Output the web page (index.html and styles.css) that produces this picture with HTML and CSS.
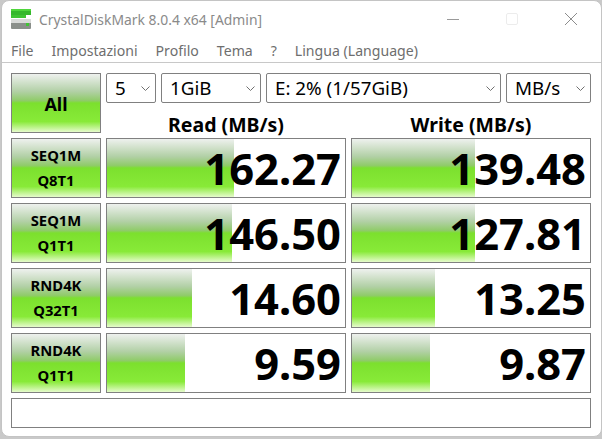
FILE: index.html
```html
<!DOCTYPE html>
<html lang="it">
<head>
<meta charset="utf-8">
<title>CrystalDiskMark</title>
<link rel="stylesheet" href="styles.css">
</head>
<body>
<div class="window">
  <header class="titlebar">
    <svg class="app-icon" width="20" height="20" viewBox="0 0 20 20">
      <rect x="0" y="0" width="20" height="6" fill="#35b82c"/>
      <rect x="0" y="0" width="20" height="2" fill="#4fd63c"/>
      <rect x="0" y="6" width="15" height="3" fill="#3fc433"/>
      <rect x="0" y="10" width="20" height="10" rx="1" fill="#8a8f8a"/>
      <rect x="0" y="10" width="20" height="4" fill="#d8dad8"/>
      <rect x="15" y="14" width="3" height="3" fill="#3fc433"/>
    </svg>
    <span class="title">CrystalDiskMark 8.0.4 x64 [Admin]</span>
    <div class="controls">
      <svg width="12" height="12" viewBox="0 0 12 12"><path d="M0 6.5H12" stroke="#9a9a9a" fill="none"/></svg>
      <svg width="12" height="12" viewBox="0 0 12 12"><rect x="0.5" y="0.5" width="11" height="11" rx="1.5" fill="none" stroke="#ececec"/></svg>
      <svg width="12" height="12" viewBox="0 0 12 12"><path d="M0 0L12 12M12 0L0 12" stroke="#8c8c8c" fill="none"/></svg>
    </div>
  </header>
  <nav class="menu">
    <span>File</span><span>Impostazioni</span><span>Profilo</span><span>Tema</span><span>?</span><span>Lingua (Language)</span>
  </nav>
  <main class="panel">
    <div class="btn all">All</div>
    <div class="head">
      <div class="selects">
        <div class="sel s-count">5<svg class="chev" viewBox="0 0 9 5"><path d="M0.5 0.5L4.5 4.5L8.5 0.5"/></svg></div>
        <div class="sel s-size">1GiB<svg class="chev" viewBox="0 0 9 5"><path d="M0.5 0.5L4.5 4.5L8.5 0.5"/></svg></div>
        <div class="sel s-drive">E: 2% (1/57GiB)<svg class="chev" viewBox="0 0 9 5"><path d="M0.5 0.5L4.5 4.5L8.5 0.5"/></svg></div>
        <div class="sel s-unit">MB/s<svg class="chev" viewBox="0 0 9 5"><path d="M0.5 0.5L4.5 4.5L8.5 0.5"/></svg></div>
      </div>
      <div class="cols"><div>Read (MB/s)</div><div>Write (MB/s)</div></div>
    </div>

    <div class="btn test">SEQ1M<br>Q8T1</div>
    <div class="val"><div class="bar" style="width:127px"></div><span>162.27</span></div>
    <div class="val"><div class="bar" style="width:123px"></div><span>139.48</span></div>

    <div class="btn test">SEQ1M<br>Q1T1</div>
    <div class="val"><div class="bar" style="width:125px"></div><span>146.50</span></div>
    <div class="val"><div class="bar" style="width:123px"></div><span>127.81</span></div>

    <div class="btn test">RND4K<br>Q32T1</div>
    <div class="val"><div class="bar" style="width:85px"></div><span>14.60</span></div>
    <div class="val"><div class="bar" style="width:83px"></div><span>13.25</span></div>

    <div class="btn test">RND4K<br>Q1T1</div>
    <div class="val"><div class="bar" style="width:78px"></div><span>9.59</span></div>
    <div class="val"><div class="bar" style="width:78px"></div><span>9.87</span></div>

    <div class="comment"></div>
  </main>
</div>
</body>
</html>
```

FILE: styles.css
```css
* { box-sizing: border-box; }
html, body { margin: 0; height: 100%; }
body {
  background: #c9c9c9;
  font-family: "Noto Sans", "Open Sans", sans-serif;
  overflow: hidden;
}
.window {
  width: 601px;
  height: 437px;
  margin-left: 1px;
  background: #fff;
  border: 1px solid #c4c4c4;
  border-radius: 8px;
  overflow: hidden;
}
.titlebar {
  height: 37px;
  display: flex;
  align-items: center;
  padding-left: 9px;
}
.app-icon { margin-top: -1px; }
.title {
  margin-left: 8px;
  font-size: 13.9px;
  color: #8a8a8a;
}
.controls {
  margin-left: auto;
  display: flex;
  gap: 47px;
  align-items: center;
  padding-right: 24px;
  margin-top: -2px;
}
.menu {
  height: 25px;
  display: flex;
  align-items: center;
  gap: 18px;
  padding-left: 9px;
  font-size: 14.1px;
  color: #6e6e6e;
  border-bottom: 1px solid #c8c8c8;
}
.panel {
  height: 373px;
  padding: 10px 0 0 9px;
  display: grid;
  grid-template-columns: 90px 240px 240px;
  grid-template-rows: 60px 60px 60px 60px 60px 30px;
  gap: 5px;
}
.btn {
  border: 1px solid #808080;
  background: linear-gradient(to bottom, #eef1ee 0%, #b2d0a6 30%, #8fcb68 46%, #7ce02e 50%, #88ea38 82%, #e6fbcc 100%);
  display: flex;
  align-items: center;
  justify-content: center;
  text-align: center;
  font-weight: 700;
  color: #000;
}
.all { font-size: 18px; padding-top: 2px; }
.test { font-size: 14.8px; line-height: 25px; padding-bottom: 1px; }
.head { grid-column: 2 / 4; display: flex; flex-direction: column; gap: 13px; }
.selects { display: flex; gap: 5px; height: 30px; }
.sel {
  border: 1px solid #808080;
  border-radius: 2px;
  background: #fff;
  display: flex;
  align-items: center;
  padding-left: 8px;
  position: relative;
  font-size: 18.8px;
  color: #000;
}
.s-count { width: 50px; }
.s-size { width: 100px; }
.s-drive { width: 235px; }
.s-unit { width: 85px; }
.chev {
  position: absolute;
  right: 5px;
  top: 12px;
  width: 9px;
  height: 5px;
  fill: none;
  stroke: #707070;
}
.cols { display: flex; gap: 5px; }
.cols div {
  width: 240px;
  text-align: center;
  font-size: 19.5px;
  font-weight: 700;
  line-height: 17px;
  color: #000;
}
.val {
  border: 1px solid #808080;
  background: #fff;
  position: relative;
  display: flex;
  align-items: center;
  justify-content: flex-end;
  padding: 1px 4px 0 0;
}
.bar {
  position: absolute;
  left: 0;
  top: 0;
  bottom: 0;
  background: linear-gradient(to bottom, #eef1ee 0%, #b2d0a6 30%, #8fcb68 46%, #7ce02e 50%, #88ea38 82%, #e6fbcc 100%);
}
.val span {
  position: relative;
  font-size: 43.5px;
  font-weight: 700;
  color: #000;
  line-height: 1;
}
.comment {
  grid-column: 1 / 4;
  border: 1px solid #808080;
  background: #fff;
}
```
